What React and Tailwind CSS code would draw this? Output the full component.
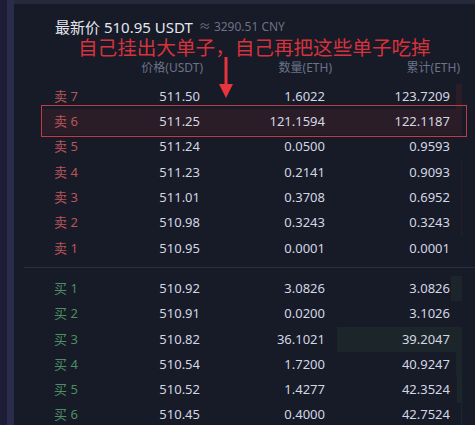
import React from "react";

const asks = [
  { label: "卖 7", price: "511.50", qty: "1.6022", total: "123.7209", bar: 6 },
  { label: "卖 6", price: "511.25", qty: "121.1594", total: "122.1187", bar: 420, marked: true },
  { label: "卖 5", price: "511.24", qty: "0.0500", total: "0.9593", bar: 0 },
  { label: "卖 4", price: "511.23", qty: "0.2141", total: "0.9093", bar: 1 },
  { label: "卖 3", price: "511.01", qty: "0.3708", total: "0.6952", bar: 1 },
  { label: "卖 2", price: "510.98", qty: "0.3243", total: "0.3243", bar: 1 },
  { label: "卖 1", price: "510.95", qty: "0.0001", total: "0.0001", bar: 0 },
];

const bids = [
  { label: "买 1", price: "510.92", qty: "3.0826", total: "3.0826", bar: 11 },
  { label: "买 2", price: "510.91", qty: "0.0200", total: "3.1026", bar: 0 },
  { label: "买 3", price: "510.82", qty: "36.1021", total: "39.2047", bar: 125 },
  { label: "买 4", price: "510.54", qty: "1.7200", total: "40.9247", bar: 6 },
  { label: "买 5", price: "510.52", qty: "1.4277", total: "42.3524", bar: 5 },
  { label: "买 6", price: "510.45", qty: "0.4000", total: "42.7524", bar: 1 },
];

function Row({ row, side }) {
  const sell = side === "sell";
  return (
    <div className="relative flex h-[25.3px] items-center pl-[40px] pr-[13px] text-[13px]">
      {row.bar > 0 && (
        <div
          className={`absolute top-0 bottom-0 right-[13px] ${sell ? "bg-[#2a1d27]" : "bg-[#1c2529]"}`}
          style={{ width: row.bar }}
        />
      )}
      {row.marked && (
        <div className="absolute left-[27px] right-[8px] -top-[4px] -bottom-[2px] border border-[#c33a43]" />
      )}
      <span className={`relative w-[80px] ${sell ? "text-[#b9555c]" : "text-[#4b8f62]"}`}>{row.label}</span>
      <span className="relative w-[66px] text-right text-[#d3d7e3]">{row.price}</span>
      <span className="relative w-[125px] text-right text-[#d3d7e3]">{row.qty}</span>
      <span className="relative w-[125px] text-right text-[#d3d7e3]">{row.total}</span>
    </div>
  );
}

export default function App() {
  return (
    <div
      className="flex h-[425px] w-[475px] overflow-hidden bg-[#171a27]"
      style={{ fontFamily: '"Noto Sans", "Noto Sans CJK SC", sans-serif' }}
    >
      <div className="w-[7px] shrink-0 bg-[#1d1e35]" />
      <div className="w-[7px] shrink-0 bg-[#2b2c4b]" />
      <div className="relative flex-1 border-t-4 border-[#252939]">
        {/* latest price */}
        <div className="mt-[13px] flex h-[20px] items-center pl-[41px] leading-none">
          <span className="text-[15px] text-[#e3e6ee]">最新价 510.95 USDT</span>
          <span className="ml-[6px] text-[12px] text-[#6c7284]">≈ 3290.51 CNY</span>
        </div>

        {/* annotation */}
        <div className="flex h-[22px] items-center pl-[64px] text-[19.6px] leading-none text-[#d6323c]">
          自己挂出大单子，自己再把这些单子吃掉
        </div>
        <svg className="absolute left-[205px] top-[53px]" width="14" height="42" viewBox="0 0 14 42">
          <rect x="5.5" y="0" width="3" height="30" fill="#e8343c" />
          <path d="M0 27 L14 27 L7 41 Z" fill="#e8343c" />
        </svg>

        {/* column headers */}
        <div className="flex h-[18px] items-center pl-[40px] pr-[13px] text-[12px] leading-none text-[#6c7388]">
          <span className="w-[80px]" />
          <span className="w-[69px] text-right">价格(USDT)</span>
          <span className="w-[129px] text-right">数量(ETH)</span>
          <span className="w-[128px] text-right">累计(ETH)</span>
        </div>

        <div className="mt-[7px]">
          {asks.map((r) => (
            <Row key={r.label} row={r} side="sell" />
          ))}
        </div>

        <div className="ml-[10px] mt-[6px] h-px bg-[#2a2f40]" />

        <div className="mt-[8px]">
          {bids.map((r) => (
            <Row key={r.label} row={r} side="buy" />
          ))}
        </div>
      </div>
    </div>
  );
}
